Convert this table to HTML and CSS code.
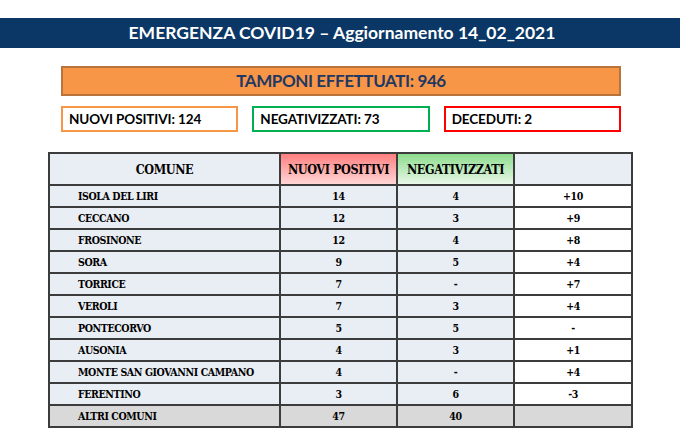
FILE: index.html
```html
<!DOCTYPE html>
<html lang="it">
<head>
<meta charset="utf-8">
<title>Emergenza COVID19</title>
<link rel="stylesheet" href="styles.css">
</head>
<body>
<header class="topbar">EMERGENZA COVID19 – Aggiornamento 14_02_2021</header>
<section class="summary">
  <div class="tamponi">TAMPONI EFFETTUATI: 946</div>
  <div class="stats">
    <div class="stat stat-pos">NUOVI POSITIVI: 124</div>
    <div class="stat stat-neg">NEGATIVIZZATI: 73</div>
    <div class="stat stat-dec">DECEDUTI: 2</div>
  </div>
</section>
<table class="grid">
  <colgroup>
    <col class="c1"><col class="c2"><col class="c3"><col class="c4">
  </colgroup>
  <thead>
    <tr>
      <th class="h-comune">COMUNE</th>
      <th class="h-pos">NUOVI POSITIVI</th>
      <th class="h-neg">NEGATIVIZZATI</th>
      <th class="h-diff"></th>
    </tr>
  </thead>
  <tbody>
    <tr><td class="name">ISOLA DEL LIRI</td><td>14</td><td>4</td><td class="diff">+10</td></tr>
    <tr><td class="name">CECCANO</td><td>12</td><td>3</td><td class="diff">+9</td></tr>
    <tr><td class="name">FROSINONE</td><td>12</td><td>4</td><td class="diff">+8</td></tr>
    <tr><td class="name">SORA</td><td>9</td><td>5</td><td class="diff">+4</td></tr>
    <tr><td class="name">TORRICE</td><td>7</td><td>-</td><td class="diff">+7</td></tr>
    <tr><td class="name">VEROLI</td><td>7</td><td>3</td><td class="diff">+4</td></tr>
    <tr><td class="name">PONTECORVO</td><td>5</td><td>5</td><td class="diff">-</td></tr>
    <tr><td class="name">AUSONIA</td><td>4</td><td>3</td><td class="diff">+1</td></tr>
    <tr><td class="name">MONTE SAN GIOVANNI CAMPANO</td><td>4</td><td>-</td><td class="diff">+4</td></tr>
    <tr><td class="name">FERENTINO</td><td>3</td><td>6</td><td class="diff">-3</td></tr>
    <tr class="others"><td class="name">ALTRI COMUNI</td><td>47</td><td>40</td><td class="diff"></td></tr>
  </tbody>
</table>
</body>
</html>
```
FILE: styles.css
```css
html, body {
  margin: 0;
  padding: 0;
  background: #ffffff;
}
body {
  width: 680px;
  height: 443px;
  overflow: hidden;
  font-family: Lato, "Liberation Sans", sans-serif;
}
.topbar {
  margin-top: 18px;
  height: 30px;
  background: #0a3766;
  color: #ffffff;
  font-weight: 700;
  font-size: 17.5px;
  line-height: 30px;
  text-align: center;
  padding-left: 4px;
}
.summary {
  margin: 18px 0 0 61px;
  width: 560px;
}
.tamponi {
  box-sizing: border-box;
  height: 30px;
  background: #f79646;
  border: 2px solid #b8743a;
  color: #1f3864;
  font-weight: 700;
  font-size: 17px;
  letter-spacing: -0.4px;
  line-height: 26px;
  text-align: center;
}
.stats {
  display: flex;
  gap: 14px;
  margin-top: 10px;
}
.stat {
  box-sizing: border-box;
  flex: 1 1 0;
  height: 26px;
  border: 2px solid;
  padding-left: 6px;
  font-weight: 700;
  font-size: 13.5px;
  letter-spacing: -0.1px;
  line-height: 22px;
  color: #000000;
}
.stat-pos { border-color: #f79646; }
.stat-neg { border-color: #00b050; }
.stat-dec { border-color: #ff0000; }

.grid {
  margin: 20px 0 0 48px;
  border-collapse: collapse;
  table-layout: fixed;
  width: 583px;
  font-family: "DejaVu Serif Condensed", "DejaVu Serif", "Liberation Serif", serif;
  font-stretch: condensed;
  font-weight: 700;
  color: #000000;
}
.c1 { width: 231px; }
.c2 { width: 117px; }
.c3 { width: 117px; }
.c4 { width: 118px; }
.grid th, .grid td {
  border: 2px solid #3c3c3c;
  padding: 0;
  text-align: center;
  background: #e9edf4;
}
.grid th {
  height: 30px;
  font-size: 12.5px;
  letter-spacing: -0.4px;
}
.grid td {
  height: 20px;
  font-size: 10.5px;
  letter-spacing: -0.4px;
}
.grid td.name {
  text-align: left;
  padding-left: 28px;
}
.grid td.diff {
  background: #ffffff;
}
.grid th.h-pos {
  background: linear-gradient(#ff7f7f, #ffd6d6);
}
.grid th.h-neg {
  background: linear-gradient(#8ddc8d, #e8f7e8);
}
.grid tr.others td {
  background: #d9d9d9;
}
```
